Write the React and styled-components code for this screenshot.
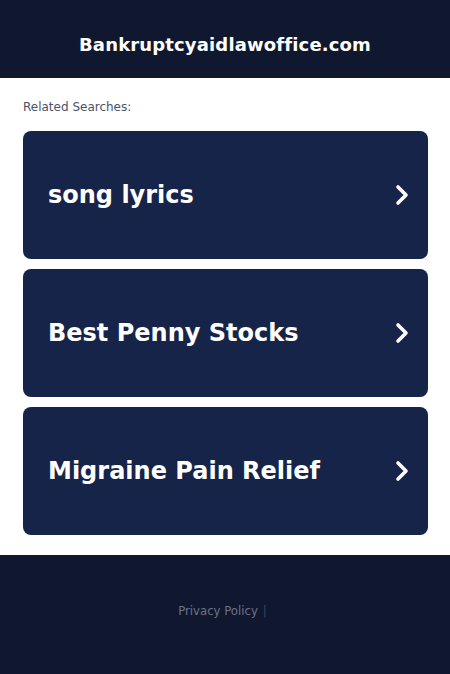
import React from 'react';
import styled, { createGlobalStyle } from 'styled-components';

const GlobalStyle = createGlobalStyle`
  html, body {
    margin: 0;
    padding: 0;
    background: #ffffff;
  }
  * {
    box-sizing: border-box;
  }
`;

const Page = styled.div`
  display: flex;
  flex-direction: column;
  min-height: 674px;
  font-family: "DejaVu Sans", sans-serif;
`;

const Header = styled.header`
  height: 78px;
  background-color: #101830;
  display: flex;
  align-items: center;
  justify-content: center;
  padding-top: 10px;
`;

const Domain = styled.h1`
  margin: 0;
  color: #ffffff;
  font-family: "DejaVu Sans", sans-serif;
  font-size: 18px;
  font-weight: 700;
  letter-spacing: 0.15px;
`;

const Content = styled.main`
  padding: 21px 22px 20px 23px;
  display: flex;
  flex-direction: column;
`;

const Label = styled.div`
  color: #4b5368;
  font-size: 12px;
  line-height: 16px;
  margin-bottom: 16px;
`;

const Links = styled.div`
  display: flex;
  flex-direction: column;
  gap: 10px;
`;

const Card = styled.a`
  height: 128px;
  border-radius: 8px;
  background-color: #172449;
  display: flex;
  align-items: center;
  justify-content: space-between;
  padding: 0 18px 0 25px;
  color: #ffffff;
  text-decoration: none;
`;

const Term = styled.span`
  font-size: 24px;
  font-weight: 700;
`;

const Chevron = () => (
  <svg width="16" height="22" viewBox="0 0 16 22">
    <path d="M4 3 L12 11 L4 19" fill="none" stroke="#ffffff" strokeWidth="3.6" strokeLinecap="round" strokeLinejoin="round" />
  </svg>
);

const Footer = styled.footer`
  flex: 1;
  background-color: #101830;
  display: flex;
  justify-content: center;
  padding-top: 45px;
`;

const FooterLinks = styled.div`
  padding-right: 5px;
`;

const FooterLink = styled.a`
  color: #6b7287;
  font-size: 11.7px;
  text-decoration: none;
`;

const Sep = styled.span`
  color: #3c4459;
  font-size: 11.7px;
  margin-left: 5px;
`;

const searches = ['song lyrics', 'Best Penny Stocks', 'Migraine Pain Relief'];

export default function App() {
  return (
    <Page>
      <GlobalStyle />
      <Header>
        <Domain>Bankruptcyaidlawoffice.com</Domain>
      </Header>
      <Content>
        <Label>Related Searches:</Label>
        <Links>
          {searches.map(s => (
            <Card key={s} href="#">
              <Term>{s}</Term>
              <Chevron />
            </Card>
          ))}
        </Links>
      </Content>
      <Footer>
        <FooterLinks>
          <FooterLink href="#">Privacy Policy</FooterLink>
          <Sep>|</Sep>
        </FooterLinks>
      </Footer>
    </Page>
  );
}
